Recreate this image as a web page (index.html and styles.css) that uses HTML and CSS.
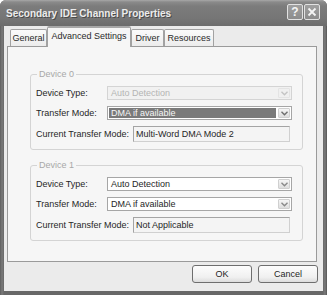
FILE: index.html
```
<!DOCTYPE html>
<html lang="en">
<head>
    <meta charset="UTF-8">
    <title>Secondary IDE Channel Properties</title>
    <link rel="stylesheet" href="styles.css">
</head>
<body>
    <div class="window">
        <div class="titlebar">
            <span class="title">Secondary IDE Channel Properties</span>
            <div class="caption-buttons">
                <span class="cap">?</span>
                <span class="cap">
                    <svg width="10" height="10" viewBox="0 0 10 10"><path d="M1.5 1.5 L8.5 8.5 M8.5 1.5 L1.5 8.5" stroke="#f4f4f4" stroke-width="1.8" fill="none"/></svg>
                </span>
            </div>
        </div>
        <div class="client">
            <div class="tabs">
                <div class="tab tab-general">General</div>
                <div class="tab tab-advanced selected">Advanced Settings</div>
                <div class="tab tab-driver">Driver</div>
                <div class="tab tab-resources">Resources</div>
            </div>
            <div class="panel">
                <fieldset class="group">
                    <legend>Device 0</legend>
                    <div class="row">
                        <span class="label">Device Type:</span>
                        <div class="combo disabled">
                            <span class="value">Auto Detection</span>
                            <span class="arrow"><svg width="7" height="5" viewBox="0 0 7 5"><path d="M0.5 0.8 L3.5 3.8 L6.5 0.8" stroke="#c4c4c4" stroke-width="1.4" fill="none"/></svg></span>
                        </div>
                    </div>
                    <div class="row">
                        <span class="label">Transfer Mode:</span>
                        <div class="combo focused">
                            <span class="value">DMA if available</span>
                            <span class="arrow"><svg width="7" height="5" viewBox="0 0 7 5"><path d="M0.5 0.8 L3.5 3.8 L6.5 0.8" stroke="#6e6e6e" stroke-width="1.4" fill="none"/></svg></span>
                        </div>
                    </div>
                    <div class="row row-current">
                        <span class="label">Current Transfer Mode:</span>
                        <div class="readonly">Multi-Word DMA Mode 2</div>
                    </div>
                </fieldset>

                <fieldset class="group">
                    <legend>Device 1</legend>
                    <div class="row">
                        <span class="label">Device Type:</span>
                        <div class="combo">
                            <span class="value">Auto Detection</span>
                            <span class="arrow"><svg width="7" height="5" viewBox="0 0 7 5"><path d="M0.5 0.8 L3.5 3.8 L6.5 0.8" stroke="#8a8a8a" stroke-width="1.4" fill="none"/></svg></span>
                        </div>
                    </div>
                    <div class="row">
                        <span class="label">Transfer Mode:</span>
                        <div class="combo">
                            <span class="value">DMA if available</span>
                            <span class="arrow"><svg width="7" height="5" viewBox="0 0 7 5"><path d="M0.5 0.8 L3.5 3.8 L6.5 0.8" stroke="#8a8a8a" stroke-width="1.4" fill="none"/></svg></span>
                        </div>
                    </div>
                    <div class="row row-current">
                        <span class="label">Current Transfer Mode:</span>
                        <div class="readonly">Not Applicable</div>
                    </div>
                </fieldset>
            </div>
            <div class="buttons">
                <div class="button">OK</div>
                <div class="button">Cancel</div>
            </div>
        </div>
    </div>
</body>
</html>
```

FILE: styles.css
```
body {
    margin: 0;
    font-family: "Liberation Sans", Arial, sans-serif;
    font-size: 9px;
    color: #262626;
    background: #ffffff;
}
.window {
    width: 327px;
    height: 295px;
    box-sizing: border-box;
    padding: 0 4px 4px 4px;
    background: linear-gradient(to right, #5e5e5e, #7a7a7a 2px, #686868 4px, #686868 323px, #7a7a7a 325px, #555555);
    border-radius: 6px 6px 0 0;
    display: flex;
    flex-direction: column;
}
.titlebar {
    height: 26px;
    margin: 0 -4px;
    padding: 0 7px 0 6px;
    border-radius: 6px 6px 0 0;
    background: linear-gradient(to bottom, #a8a8a8 0, #8a8a8a 2px, #7c7c7c 6px, #767676 18px, #6c6c6c 26px);
    display: flex;
    align-items: center;
    justify-content: space-between;
}
.title {
    font-size: 10px;
    font-weight: bold;
    color: #ececec;
    text-shadow: 1px 1px 0 #4a4a4a;
    margin-top: 1px;
}
.caption-buttons {
    display: flex;
    gap: 1px;
    margin-top: -2px;
}
.cap {
    width: 14px;
    height: 14px;
    border: 1px solid #e2e2e2;
    border-radius: 2px;
    background: linear-gradient(to bottom, #a0a0a0, #8c8c8c);
    color: #f4f4f4;
    font-size: 12px;
    font-weight: bold;
    display: flex;
    align-items: center;
    justify-content: center;
}
.client {
    flex: 1;
    background: #ebebeb;
    display: flex;
    flex-direction: column;
}
.tabs {
    display: flex;
    align-items: flex-end;
    height: 20px;
    padding-left: 6px;
}
.tab {
    box-sizing: border-box;
    height: 17px;
    border: 1px solid #a2a2a2;
    border-bottom: none;
    border-radius: 2px 2px 0 0;
    background: linear-gradient(to bottom, #fbfbfb, #ececec);
    display: flex;
    align-items: center;
    justify-content: center;
    color: #2a2a2a;
}
.tab-general { width: 37px; }
.tab-advanced { width: 84px; }
.tab-driver { width: 33px; }
.tab-resources { width: 50px; }
.tab.selected {
    height: 21px;
    margin-bottom: -1px;
    background: #f6f6f6;
    border-top: 2px solid #a8a8a8;
    position: relative;
    z-index: 1;
    padding-bottom: 3px;
}
.panel {
    margin-left: 3px;
    width: 310px;
    height: 216px;
    box-sizing: border-box;
    border: 1px solid #9a9a9a;
    background: #f6f6f6;
    padding: 22px 0 0 22px;
}
.group {
    margin: 0 0 10px 0;
    width: 273px;
    box-sizing: border-box;
    border: 1px solid #d4d4d4;
    border-radius: 3px;
    padding: 6px 0 7px 5px;
}
.group legend {
    padding: 0 2px;
    margin-left: 1px;
    line-height: 11px;
    color: #a8a8a8;
}
.row {
    display: flex;
    align-items: center;
    height: 14px;
    margin-bottom: 6px;
}
.row-current {
    height: 16px;
    margin-bottom: 0;
}
.label {
    width: 71px;
    flex-shrink: 0;
}
.row-current .label {
    width: 97px;
}
.combo {
    width: 185px;
    height: 14px;
    box-sizing: border-box;
    border: 1px solid #a6a6a6;
    background: #ffffff;
    display: flex;
    align-items: center;
    padding: 1px;
}
.combo .value {
    flex: 1;
    height: 10px;
    line-height: 10px;
    padding-left: 2px;
    margin-right: 2px;
}
.combo .arrow {
    width: 12px;
    height: 10px;
    box-sizing: border-box;
    border: 1px solid #d0d0d0;
    border-radius: 1px;
    background: linear-gradient(to bottom, #f6f6f6, #dedede);
    display: flex;
    align-items: center;
    justify-content: center;
}
.combo.disabled {
    border-color: #d4d4d4;
    background: #f1f1f1;
    color: #b4b4b4;
}
.combo.disabled .arrow {
    border-color: #e4e4e4;
    background: #f0f0f0;
}
.combo.focused .value {
    background: #7a7a7a;
    color: #f6f6f6;
}
.readonly {
    width: 157px;
    height: 16px;
    box-sizing: border-box;
    border: 1px solid #a4a4a4;
    border-right-color: #d0d0d0;
    border-bottom-color: #d0d0d0;
    background: #f4f4f4;
    padding-left: 2px;
    line-height: 14px;
}
.buttons {
    display: flex;
    justify-content: flex-end;
    gap: 6px;
    padding: 3px 5px 0 0;
}
.button {
    width: 60px;
    height: 18px;
    box-sizing: border-box;
    border: 1px solid #6e6e6e;
    border-radius: 3px;
    background: linear-gradient(to bottom, #fdfdfd, #f0f0f0 70%, #dcdcdc);
    display: flex;
    align-items: center;
    justify-content: center;
    color: #1e1e1e;
}
```
